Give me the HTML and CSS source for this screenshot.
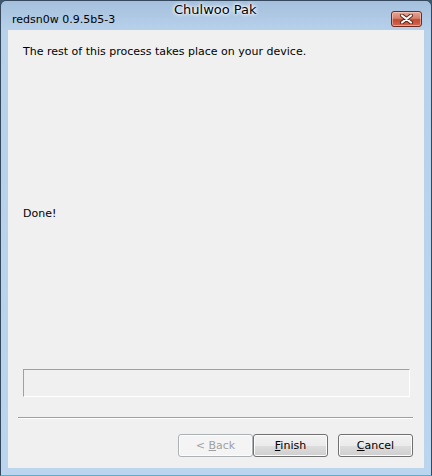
FILE: index.html
```html
<!DOCTYPE html>
<html lang="en">
  <head>
    <meta charset="UTF-8" />
    <title>redsn0w 0.9.5b5-3</title>
    <link rel="stylesheet" href="styles.css">
  </head>
  <body>
    <div class="window">
      <div class="titlebar">
        <span class="title">redsn0w 0.9.5b5-3</span>
        <span class="caption">Chulwoo Pak</span>
        <button class="close-btn" aria-label="Close">
          <svg width="15" height="10" viewBox="0 0 15 10">
            <path d="M3 1.5 L12 8.5 M12 1.5 L3 8.5" stroke="#5a2118" stroke-width="4" stroke-linecap="round"/>
            <path d="M3 1.5 L12 8.5 M12 1.5 L3 8.5" stroke="#ffffff" stroke-width="2.2" stroke-linecap="round"/>
          </svg>
        </button>
      </div>

      <div class="client">
        <p class="message">The rest of this process takes place on your device.</p>
        <p class="status">Done!</p>
        <div class="progress"></div>
        <div class="separator"></div>
        <div class="buttons">
          <button class="btn" disabled>&lt; <u>B</u>ack</button>
          <button class="btn"><u>F</u>inish</button>
          <button class="btn btn-cancel"><u>C</u>ancel</button>
        </div>
      </div>
    </div>
  </body>
</html>
```

FILE: styles.css
```css
* {
  margin: 0;
  padding: 0;
  box-sizing: border-box;
}

body {
  width: 432px;
  height: 476px;
  font-family: "DejaVu Sans", sans-serif;
  font-size: 11px;
  color: #000;
  background: #3f5870;
}

.window {
  width: 432px;
  height: 476px;
  display: flex;
  flex-direction: column;
  border: 1px solid #34495e;
  border-bottom-color: #29c4e4;
  border-radius: 6px 6px 0 0;
  background: linear-gradient(#a5c0dd 0px, #b8d1eb 30px, #bcd5ee 100%);
  padding: 0 7px 7px 7px;
}

.titlebar {
  height: 29px;
  display: flex;
  align-items: flex-start;
  position: relative;
}

.title {
  font-size: 11px;
  margin: 12px 0 0 4px;
}

.caption {
  position: absolute;
  left: 166px;
  top: 1px;
  font-size: 13px;
  color: #000;
  text-shadow: 0 0 4px #fff, 0 0 4px #fff, 0 0 2px #fff;
}

.close-btn {
  margin: 10px 2px 0 auto;
  width: 31px;
  height: 16px;
  border: 1px solid #6e2a1e;
  border-radius: 3px;
  background: linear-gradient(#e8a493 0%, #d8806c 45%, #c24a32 55%, #cf6a50 100%);
  box-shadow: inset 0 0 0 1px rgba(255, 220, 210, 0.5);
  display: flex;
  align-items: center;
  justify-content: center;
}

.client {
  flex: 1;
  background: #f0f0f0;
  display: flex;
  flex-direction: column;
  padding: 15px 11px 11px 15px;
}

.message {
  line-height: 13px;
}

.status {
  margin-top: 149px;
  line-height: 13px;
}

.progress {
  margin-top: 149px;
  width: 387px;
  height: 28px;
  border: 1px solid #fff;
  border-top-color: #a0a0a0;
  border-left-color: #a0a0a0;
}

.separator {
  margin: 20px 0 0 -5px;
  height: 2px;
  border-top: 1px solid #a0a0a0;
  border-bottom: 1px solid #fff;
}

.buttons {
  display: flex;
  justify-content: flex-end;
  margin-top: auto;
}

.btn {
  width: 75px;
  height: 23px;
  font-family: "DejaVu Sans", sans-serif;
  font-size: 11px;
  color: #000;
  border: 1px solid #707070;
  border-radius: 3px;
  background: linear-gradient(#f2f2f2 0%, #ebebeb 50%, #dddddd 51%, #cfcfcf 100%);
  box-shadow: inset 0 0 0 1px #fcfcfc;
}

.btn:disabled {
  color: #a0a0a0;
  border-color: #adb2b5;
  background: #f4f4f4;
}

.btn-cancel {
  margin-left: 10px;
}
```
